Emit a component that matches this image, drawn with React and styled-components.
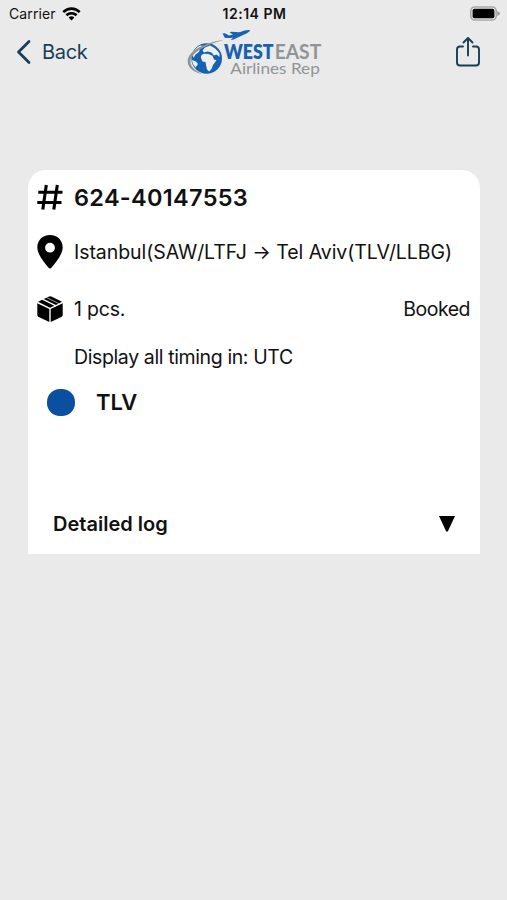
import React, { useState } from "react";
import styled, { createGlobalStyle } from "styled-components";

const GlobalStyle = createGlobalStyle`
  * {
    box-sizing: border-box;
  }

  body {
    margin: 0;
    background-color: #eaeaea;
    font-family: Inter, "Liberation Sans", sans-serif;
    color: #111;
  }
`;

const Screen = styled.div`
  width: 100%;
  max-width: 507px;
  height: 900px;
  background-color: #eaeaea;
`;

const StatusBar = styled.div`
  display: grid;
  grid-template-columns: 1fr auto 1fr;
  align-items: center;
  height: 27px;
  padding: 0 7px 0 9px;
`;

const Carrier = styled.div`
  display: flex;
  align-items: center;
  gap: 6px;
  font-size: 14px;
  letter-spacing: 0.1px;
`;

const Clock = styled.div`
  font-size: 14px;
  font-weight: 600;
  letter-spacing: 0.5px;
`;

const BatteryIcon = styled.svg`
  justify-self: end;
`;

const NavBar = styled.div`
  display: grid;
  grid-template-columns: 1fr auto 1fr;
  align-items: center;
  height: 54px;
  padding: 0 26px 4px 27px;
`;

const BackButton = styled.button`
  display: flex;
  align-items: center;
  gap: 10px;
  margin-left: -12px;
  padding: 0;
  border: none;
  background: none;
  color: #173f57;
  font-family: inherit;
  font-size: 20px;
  line-height: 24px;
  letter-spacing: -0.3px;
  cursor: pointer;
`;

const ShareButton = styled.button`
  display: flex;
  justify-self: end;
  padding: 0;
  border: none;
  background: none;
  color: #173f57;
  cursor: pointer;
`;

const Card = styled.div`
  margin: 89px 27px 0 28px;
  height: 384px;
  border-radius: 18px 18px 0 0;
  background-color: #fff;
`;

const Row = styled.div`
  display: grid;
  grid-template-columns: 28px 1fr auto;
  column-gap: 10px;
  align-items: center;
  height: ${(props) => props.$height}px;
  padding: 0 10px 0 8px;
`;

const AwbNumber = styled.div`
  font-size: 23.5px;
  font-weight: 600;
  letter-spacing: 0.3px;
`;

const Text = styled.div`
  grid-column: ${(props) => props.$column || "auto"};
  font-size: 19.5px;
  letter-spacing: ${(props) => props.$spacing || 0}px;
  white-space: nowrap;
`;

const Stop = styled.div`
  display: flex;
  align-items: center;
  gap: 21px;
  height: 52px;
  padding-left: 19px;
`;

const StopDot = styled.span`
  width: 28px;
  height: 27px;
  border-radius: 13px;
  background-color: #0b50a0;
`;

const StopName = styled.div`
  font-size: 22px;
  font-weight: 600;
`;

const LogToggle = styled.button`
  display: flex;
  align-items: center;
  justify-content: space-between;
  width: 100%;
  height: 60px;
  margin-top: 66px;
  padding: 0 25px;
  border: none;
  background: none;
  color: #111;
  font-family: inherit;
  font-size: 20px;
  font-weight: 600;
  cursor: pointer;
`;

const Arrow = styled.svg`
  transform: rotate(${(props) => (props.$open ? 180 : 0)}deg);
`;

const WifiIcon = () => (
  <svg width="19" height="14" viewBox="0 0 19 14">
    <g fill="none" stroke="#000" strokeWidth="2.6">
      <path d="M1.3 5.1C6 .5 13 .5 17.7 5.1" />
      <path d="M4.4 8.3C7.3 5.5 11.7 5.5 14.6 8.3" />
    </g>
    <path d="M9.5 13.5 6.6 10.5Q9.5 8.1 12.4 10.5Z" />
  </svg>
);

const Battery = () => (
  <BatteryIcon width="31" height="15" viewBox="0 0 31 15">
    <rect x="1.8" y="1" width="25.4" height="13" rx="4" fill="#eaeaea" stroke="#aaa" strokeWidth="1.6" />
    <rect x="3.6" y="2.8" width="21.8" height="9.4" rx="1.8" fill="#000" />
    <path d="M28.3 5.1Q31 6.2 31 7.5T28.3 9.9Z" fill="#999" />
  </BatteryIcon>
);

const Logo = () => (
  <svg width="140" height="50" viewBox="184 27 140 50">
    <circle cx="206.7" cy="58.5" r="15.3" fill="#1762ae" />
    <g fill="#eeefef">
      {/* north america and greenland */}
      <path d="M192.5 54Q194.500 48.500 200 45.500L203.500 46 200 49 199 52 195.500 54.500 193.500 58Z" />
      {/* south america */}
      <path d="M191.800 60 196 61.500 198 64 195.500 67.500Q192.500 64.500 191.800 60Z" />
      {/* europe and asia */}
      <path d="M202.500 50.500 205 47.500 210 45.500Q216 48 219.500 53.500L219.500 57 216.500 54.500 214 55.500 211.500 52.500 207.500 51.500 204 52.500Z" />
      {/* africa */}
      <path d="M200.800 57.500Q201 54.500 204 53.800L208.500 54 212.500 55.800 214 59.500 216.500 60.200 213 65 211.500 69 209 71.500 207 69.500 206 65 205.500 62 202.500 61.500Z" />
    </g>
    <path
      d="M224 39.800C206 42.500 188 50.500 187.700 61C187.500 68 194 72.500 202 74C194 70 190 66 190.500 60.500C192 52 207 44.500 224 39.800Z"
      fill="#919497"
    />
    <path
      d="M222.500 33.500 225 33.300 229 35.400 233 34.400 229.500 32.400 231.500 31.700 239.500 32.200Q246 29.500 250 30C250.200 31.500 247 33.500 242.500 35.200L233 39.700 230.500 39.700 233.500 37.400Q229 38.500 224.800 37.800Z"
      fill="#1762ae"
    />
    <g fontFamily="Lato, sans-serif">
      <text x="224" y="58.5" fontSize="20.5" fontWeight="800" fill="#1762ae" textLength="49.5" lengthAdjust="spacingAndGlyphs">
        WEST
      </text>
      <text x="274.7" y="58.5" fontSize="20.5" fontWeight="700" fill="#919497" textLength="46.5" lengthAdjust="spacingAndGlyphs">
        EAST
      </text>
      <text x="230.3" y="74" fontSize="16" fill="#919497" textLength="89.5" lengthAdjust="spacingAndGlyphs">
        Airlines Rep
      </text>
    </g>
  </svg>
);

const HashIcon = () => (
  <svg width="28" height="28" viewBox="0 0 28 28">
    <path
      d="M10.3 2 6.800 26.500M21.300 2 17.800 26.500M2.300 9.300H26.500M1.300 19.500H25.500"
      fill="none"
      stroke="#000"
      strokeWidth="3.1"
    />
  </svg>
);

const PinIcon = () => (
  <svg width="28" height="36" viewBox="0 0 28 36">
    <path
      d="M14 1C6.500 1 1.300 6.500 1.300 13.300C1.300 20.500 8 28 12.600 33.800Q14 35.400 15.400 33.800C20 28 26.700 20.500 26.700 13.300C26.700 6.500 21.500 1 14 1ZM14 8.800A4.900 4.900 0 1 1 14 18.600A4.900 4.900 0 1 1 14 8.800Z"
      fillRule="evenodd"
    />
  </svg>
);

const BoxIcon = () => (
  <svg width="28" height="28" viewBox="0 0 28 28">
    <path d="M1.3 8.200 13.300 13.900V27L2.200 21.700Q1.300 21.200 1.300 20.300ZM26.700 8.200 14.700 13.900V27L25.800 21.700Q26.700 21.200 26.700 20.300Z" />
    <path d="M2 6.800 6.200 4.800 18.300 10.700 14 12.700ZM7.800 4 12.600 1.700Q14 .8 15.400 1.500L26 6.800 19.900 9.900Z" />
    <path d="M10.500 2.500 23.500 8.900" stroke="#fff" strokeWidth="0.6" />
  </svg>
);

const DetailScreen = () => {
  const [logOpen, setLogOpen] = useState(false);

  return (
    <>
      <GlobalStyle />
      <Screen>
        <StatusBar>
          <Carrier>
            Carrier
            <WifiIcon />
          </Carrier>
          <Clock>12:14 PM</Clock>
          <Battery />
        </StatusBar>
        <NavBar>
          <BackButton>
            <svg width="17" height="26" viewBox="0 0 17 26">
              <path d="M14 2.500 3.500 13 14 23.500" fill="none" stroke="currentColor" strokeWidth="2.8" strokeLinecap="round" strokeLinejoin="round" />
            </svg>
            Back
          </BackButton>
          <Logo />
          <ShareButton aria-label="Share">
            <svg width="26" height="32" viewBox="0 0 26 32" fill="none" stroke="currentColor" strokeWidth="1.9" strokeLinecap="round" strokeLinejoin="round">
              <path d="M8 10.500H5Q2 10.500 2 13.500V26.500Q2 29.500 5 29.500H21Q24 29.500 24 26.500V13.500Q24 10.500 21 10.500H18" />
              <path d="M13 19.500V2.500M8.500 6.500 13 2 17.500 6.500" />
            </svg>
          </ShareButton>
        </NavBar>
        <Card>
          <Row $height={54}>
            <HashIcon />
            <AwbNumber>624-40147553</AwbNumber>
          </Row>
          <Row $height={56}>
            <PinIcon />
            <Text $spacing={-0.06}>Istanbul(SAW/LTFJ → Tel Aviv(TLV/LLBG)</Text>
          </Row>
          <Row $height={57}>
            <BoxIcon />
            <Text $spacing={-0.2}>1 pcs.</Text>
            <Text $spacing={-0.5}>Booked</Text>
          </Row>
          <Row $height={39}>
            <Text $column={2} $spacing={-0.38}>
              Display all timing in: UTC
            </Text>
          </Row>
          <Stop>
            <StopDot />
            <StopName>TLV</StopName>
          </Stop>
          <LogToggle onClick={() => setLogOpen(!logOpen)}>
            Detailed log
            <Arrow $open={logOpen} width="16" height="16" viewBox="0 0 16 16">
              <path d="M0 0H16L8.800 15.500H7.200Z" />
            </Arrow>
          </LogToggle>
        </Card>
      </Screen>
    </>
  );
};

export default DetailScreen;
